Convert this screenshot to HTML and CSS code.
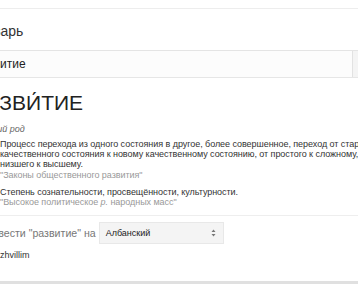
FILE: index.html
```html
<!DOCTYPE html>
<html lang="ru">
<head>
<meta charset="utf-8">
<link rel="stylesheet" href="styles.css">
</head>
<body>
<div class="page">
  <div class="topbar"></div>
  <div class="header"><span class="header-title">Словарь</span></div>
  <div class="search">
    <div class="search-input">развитие</div>
    <div class="search-btn"></div>
  </div>
  <div class="article">
    <h1 class="word">РАЗВИ́ТИЕ</h1>
    <div class="gram">средний род</div>
    <ol class="defs">
      <li>
        <div class="def">Процесс перехода из одного состояния в другое, более совершенное, переход от старого качественного состояния к новому качественному состоянию, от простого к сложному, от низшего к высшему.</div>
        <div class="ex">"Законы общественного развития"</div>
      </li>
      <li>
        <div class="def">Степень сознательности, просвещённости, культурности.</div>
        <div class="ex">"Высокое политическое <i>р.</i> народных масс"</div>
      </li>
    </ol>
  </div>
  <div class="translate">
    <div class="tr-row">
      <span class="tr-label">Перевести "развитие" на</span>
      <div class="select">
        <span>Албанский</span>
        <svg class="arrows" width="5" height="8" viewBox="0 0 5 8"><path d="M2.5 0.5 L4.5 3 L0.5 3 Z M2.5 7.5 L4.5 5 L0.5 5 Z" fill="#777"/></svg>
      </div>
    </div>
    <div class="tr-result">zhvillim</div>
  </div>
</div>
</body>
</html>
```
FILE: styles.css
```css
html, body {
  margin: 0;
  padding: 0;
  background: #fff;
  overflow: hidden;
}
body {
  font-family: "Liberation Sans", Arial, sans-serif;
  color: #333;
}
.page {
  margin-left: -27px;
  width: 440px;
  border-bottom: 3px solid #e0e0e0;
}
.topbar {
  height: 8px;
  border-bottom: 1px solid #ededed;
}
.header {
  height: 41px;
  display: flex;
  align-items: center;
  padding-top: 3px;
  box-sizing: border-box;
}
.header-title {
  margin-left: -6px;
  font-size: 14px;
  color: #333;
}
.search {
  display: flex;
  border-top: 1px solid #e4e4e4;
  border-bottom: 1px solid #e6e6e6;
  height: 26px;
}
.search-input {
  width: 380px;
  background: #fcfcfc;
  border-right: 1px solid #e2e2e2;
  font-size: 12px;
  display: flex;
  align-items: center;
  padding-left: 2px;
  box-sizing: border-box;
  color: #222;
}
.search-btn {
  flex: 1;
  background: #f4f4f4;
}
.article {
  padding-top: 12px;
}
.word {
  margin: 0;
  font-size: 21px;
  font-weight: normal;
  line-height: 26px;
  color: #222;
}
.gram {
  margin-top: 8px;
  font-size: 9px;
  line-height: 10px;
  font-style: italic;
  color: #666;
}
.defs {
  margin: 5px 0 0 0;
  padding-left: 27px;
  font-size: 9px;
  line-height: 10.2px;
  letter-spacing: -0.05px;
  width: 385px;
  color: #333;
}
.defs li {
  margin-bottom: 7px;
}
.defs li:last-child {
  margin-bottom: 0;
}
.ex {
  color: #999;
}
.translate {
  margin-top: 8px;
  border-top: 1px solid #eee;
  padding-top: 6px;
  padding-bottom: 21px;
}
.tr-row {
  display: flex;
  align-items: center;
  gap: 3px;
}
.tr-label {
  font-size: 10.6px;
  color: #777;
}
.select {
  width: 125px;
  height: 22px;
  box-sizing: border-box;
  border: 1px solid #e8e8e8;
  background: #f4f4f4;
  display: flex;
  align-items: center;
  justify-content: space-between;
  padding: 0 7px 0 6px;
  font-size: 9px;
  color: #222;
}
.arrows {
  display: block;
}
.tr-result {
  margin-top: 6px;
  padding-left: 27px;
  font-size: 9px;
  line-height: 10px;
  color: #333;
}
```
